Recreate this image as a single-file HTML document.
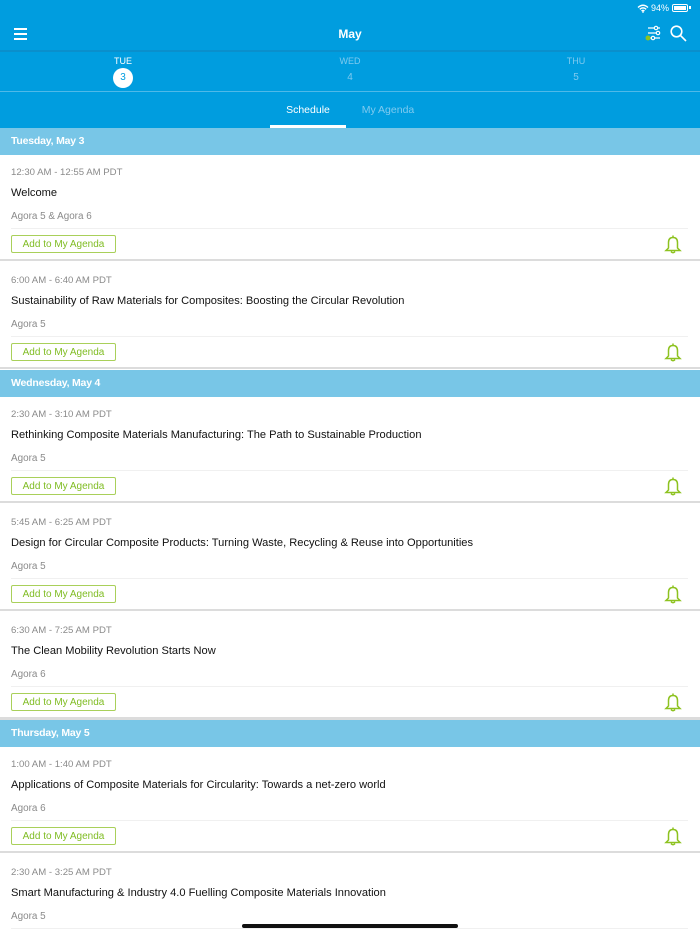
<!DOCTYPE html>
<html><head><meta charset="utf-8"><style>
*{margin:0;padding:0;box-sizing:border-box}
html,body{width:700px;height:934px;overflow:hidden}
body{background:#fff;font-family:"Liberation Sans",sans-serif;position:relative}
.a{position:absolute}
.top{left:0;top:0;width:700px;height:128px;background:#009ddf}
.sec{left:0;width:700px;height:27px;background:#78c6e7;color:#fff;font-weight:bold;font-size:10.5px;line-height:27px;padding-left:11px;letter-spacing:-0.2px}
.ev{left:0;width:700px;height:108px}
.ev .t{position:absolute;left:11px;top:12px;font-size:9.6px;color:#8a8a8a}
.ev .n{position:absolute;left:11px;top:32px;font-size:11.1px;color:#111}
.ev .r{position:absolute;left:11px;top:56px;font-size:9.9px;color:#8a8a8a}
.ev .sep{position:absolute;left:11px;right:12px;top:73px;height:1px;background:#f0f0f0}
.ev .b{position:absolute;left:11px;top:80px;width:105px;height:18px;border:1px solid #a9d05a;border-radius:2px;color:#7fbc22;font-size:10px;line-height:18px;text-align:center}
.ev .bot{position:absolute;left:0;right:0;top:104px;height:2px;background:#dcdcdc}
.ev svg{position:absolute;left:664px;top:79px}
</style></head><body>
<div class="a top"></div>
<div class="a" style="left:0;top:50px;width:700px;height:2px;background:#0a8fcc"></div>
<div class="a" style="left:0;top:91px;width:700px;height:1px;background:#4fb9e8"></div>
<svg class="a" style="left:637px;top:4px" width="12" height="9" viewBox="0 0 12 9"><path d="M1 3.5Q6 -1 11 3.5M2.8 5.3Q6 2.5 9.2 5.3M4.5 7Q6 5.8 7.5 7" stroke="#fff" stroke-width="1.4" fill="none"/><circle cx="6" cy="8" r="0.9" fill="#fff"/></svg>
<div class="a" style="left:651px;top:3px;color:#fff;font-size:9px">94%</div>
<div class="a" style="left:672px;top:4px;width:16px;height:8px;border:1px solid #fff;border-radius:2px;padding:1px"><div style="width:12px;height:4px;background:#fff"></div></div>
<div class="a" style="left:689px;top:6px;width:1.5px;height:3px;background:#fff"></div>
<div class="a" style="left:14px;top:28px;width:13px;height:1.5px;background:#fff"></div>
<div class="a" style="left:14px;top:33px;width:13px;height:1.5px;background:#fff"></div>
<div class="a" style="left:14px;top:38px;width:13px;height:1.5px;background:#fff"></div>
<div class="a" style="left:0;top:27px;width:700px;text-align:center;color:#fff;font-weight:bold;font-size:12px">May</div>
<svg class="a" style="left:645px;top:25px" width="18" height="18" viewBox="0 0 18 18" fill="none" stroke="#fff" stroke-width="1.2"><path d="M3 3h12M3 8h12M3 13h12"/><circle cx="11" cy="3" r="1.7" fill="#009ddf"/><circle cx="13" cy="8" r="1.7" fill="#009ddf"/><circle cx="8" cy="13" r="1.7" fill="#009ddf"/><circle cx="3" cy="13" r="2.5" fill="#8dc21f" stroke="none"/></svg>
<svg class="a" style="left:670px;top:25px" width="17" height="17" viewBox="0 0 17 17" fill="none" stroke="#fff" stroke-width="1.6"><circle cx="6.5" cy="6.5" r="5.3"/><path d="M10.3 10.3L16 16"/></svg>
<div class="a" style="left:98px;top:56px;width:50px;text-align:center;color:#fff;font-size:9px">TUE</div>
<div class="a" style="left:113px;top:68px;width:20px;height:20px;border-radius:50%;background:#fff;color:#009ddf;font-size:10px;text-align:center;line-height:20px">3</div>
<div class="a" style="left:325px;top:56px;width:50px;text-align:center;color:#7fcaef;font-size:9px">WED</div>
<div class="a" style="left:325px;top:72px;width:50px;text-align:center;color:#7fcaef;font-size:10px">4</div>
<div class="a" style="left:551px;top:56px;width:50px;text-align:center;color:#7fcaef;font-size:9px">THU</div>
<div class="a" style="left:551px;top:72px;width:50px;text-align:center;color:#7fcaef;font-size:10px">5</div>
<div class="a" style="left:270px;top:104px;width:76px;text-align:center;color:#fff;font-size:10.5px">Schedule</div>
<div class="a" style="left:352px;top:104px;width:72px;text-align:center;color:#7fcaef;font-size:10.5px">My Agenda</div>
<div class="a" style="left:270px;top:125px;width:76px;height:3px;background:#fff"></div>

<div class="a sec" style="top:128px">Tuesday, May 3</div>
<div class="a sec" style="top:370px">Wednesday, May 4</div>
<div class="a sec" style="top:720px">Thursday, May 5</div>

<div class="a ev" style="top:155px"><div class="t">12:30 AM - 12:55 AM PDT</div><div class="n">Welcome</div><div class="r">Agora 5 &amp; Agora 6</div><div class="sep"></div><div class="b">Add to My Agenda</div><svg width="18" height="20" viewBox="0 0 18 20" fill="none" stroke="#8dc21f" stroke-width="1.5"><path d="M9 1.5V3M4.5 14V8.5Q4.5 3.5 9 3.5Q13.5 3.5 13.5 8.5V14L16 16.5H2L4.5 14ZM7 17.5Q9 20 11 17.5"/></svg><div class="bot"></div></div>
<div class="a ev" style="top:263px"><div class="t">6:00 AM - 6:40 AM PDT</div><div class="n">Sustainability of Raw Materials for Composites: Boosting the Circular Revolution</div><div class="r">Agora 5</div><div class="sep"></div><div class="b">Add to My Agenda</div><svg width="18" height="20" viewBox="0 0 18 20" fill="none" stroke="#8dc21f" stroke-width="1.5"><path d="M9 1.5V3M4.5 14V8.5Q4.5 3.5 9 3.5Q13.5 3.5 13.5 8.5V14L16 16.5H2L4.5 14ZM7 17.5Q9 20 11 17.5"/></svg><div class="bot"></div></div>
<div class="a ev" style="top:397px"><div class="t">2:30 AM - 3:10 AM PDT</div><div class="n">Rethinking Composite Materials Manufacturing: The Path to Sustainable Production</div><div class="r">Agora 5</div><div class="sep"></div><div class="b">Add to My Agenda</div><svg width="18" height="20" viewBox="0 0 18 20" fill="none" stroke="#8dc21f" stroke-width="1.5"><path d="M9 1.5V3M4.5 14V8.5Q4.5 3.5 9 3.5Q13.5 3.5 13.5 8.5V14L16 16.5H2L4.5 14ZM7 17.5Q9 20 11 17.5"/></svg><div class="bot"></div></div>
<div class="a ev" style="top:505px"><div class="t">5:45 AM - 6:25 AM PDT</div><div class="n">Design for Circular Composite Products: Turning Waste, Recycling &amp; Reuse into Opportunities</div><div class="r">Agora 5</div><div class="sep"></div><div class="b">Add to My Agenda</div><svg width="18" height="20" viewBox="0 0 18 20" fill="none" stroke="#8dc21f" stroke-width="1.5"><path d="M9 1.5V3M4.5 14V8.5Q4.5 3.5 9 3.5Q13.5 3.5 13.5 8.5V14L16 16.5H2L4.5 14ZM7 17.5Q9 20 11 17.5"/></svg><div class="bot"></div></div>
<div class="a ev" style="top:613px"><div class="t">6:30 AM - 7:25 AM PDT</div><div class="n">The Clean Mobility Revolution Starts Now</div><div class="r">Agora 6</div><div class="sep"></div><div class="b">Add to My Agenda</div><svg width="18" height="20" viewBox="0 0 18 20" fill="none" stroke="#8dc21f" stroke-width="1.5"><path d="M9 1.5V3M4.5 14V8.5Q4.5 3.5 9 3.5Q13.5 3.5 13.5 8.5V14L16 16.5H2L4.5 14ZM7 17.5Q9 20 11 17.5"/></svg><div class="bot" style="height:3px"></div></div>
<div class="a ev" style="top:747px"><div class="t">1:00 AM - 1:40 AM PDT</div><div class="n">Applications of Composite Materials for Circularity: Towards a net-zero world</div><div class="r">Agora 6</div><div class="sep"></div><div class="b">Add to My Agenda</div><svg width="18" height="20" viewBox="0 0 18 20" fill="none" stroke="#8dc21f" stroke-width="1.5"><path d="M9 1.5V3M4.5 14V8.5Q4.5 3.5 9 3.5Q13.5 3.5 13.5 8.5V14L16 16.5H2L4.5 14ZM7 17.5Q9 20 11 17.5"/></svg><div class="bot"></div></div>
<div class="a ev" style="top:855px;height:79px"><div class="t">2:30 AM - 3:25 AM PDT</div><div class="n">Smart Manufacturing &amp; Industry 4.0 Fuelling Composite Materials Innovation</div><div class="r">Agora 5</div><div class="sep"></div></div>
<div class="a" style="left:242px;top:924px;width:216px;height:4px;border-radius:2px;background:#111"></div>
</body></html>
